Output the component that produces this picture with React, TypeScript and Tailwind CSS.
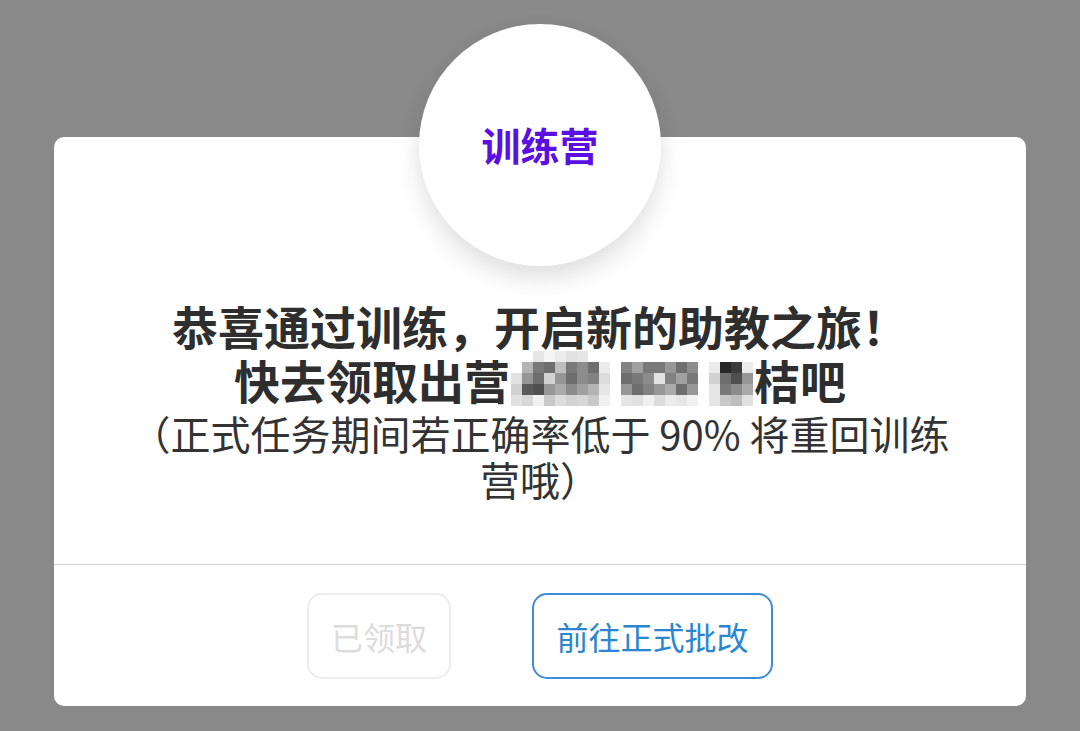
import React from "react";

const mosaic: number[][] = [
  [0, 0, 230, 245, 235, 225, 230, 0, 0, 0, 0, 0, 0, 0, 0, 0, 0, 0, 0, 0, 0, 0],
  [0, 180, 120, 110, 190, 120, 140, 110, 235, 0, 130, 160, 120, 120, 150, 110, 140, 0, 235, 40, 60, 235],
  [225, 150, 110, 210, 150, 110, 140, 130, 220, 0, 110, 120, 140, 225, 130, 160, 120, 0, 210, 110, 80, 150],
  [210, 90, 80, 150, 170, 140, 160, 180, 230, 0, 150, 110, 130, 150, 170, 110, 150, 0, 230, 120, 140, 170],
  [225, 215, 240, 200, 220, 210, 215, 200, 240, 0, 230, 225, 240, 220, 235, 230, 240, 0, 230, 200, 190, 225],
];

function Mosaic() {
  return (
    <span className="inline-flex flex-col align-middle mx-[1px] translate-y-[-1px]">
      {mosaic.map((row, r) => (
        <span key={r} className="flex">
          {row.map((v, c) => (
            <span
              key={c}
              className="block w-[11px] h-[11px]"
              style={{ backgroundColor: v === 0 ? "transparent" : `rgb(${v},${v},${v})` }}
            />
          ))}
        </span>
      ))}
    </span>
  );
}

export default function App() {
  return (
    <div
      className="w-[1080px] h-[731px] bg-[#898989] pt-[137px] px-[54px] overflow-hidden"
      style={{ fontFamily: '"Noto Sans CJK SC", "Noto Sans", sans-serif' }}
    >
      <div className="w-[972px] h-[569px] bg-white rounded-[10px] flex flex-col">
        <div className="self-center -mt-[113px] w-[242px] h-[242px] rounded-full bg-white shadow-[0_12px_24px_rgba(0,0,0,0.13)] flex items-center justify-center">
          <span className="text-[#5a10e2] text-[39px] font-bold leading-none -mt-[2px]">训练营</span>
        </div>
        <div className="px-[62px] mt-[33px] text-center text-[#2e2e2e]">
          <div className="text-[46px] font-bold leading-[53px]">
            <div>恭喜通过训练，开启新的助教之旅！</div>
            <div className="flex items-center justify-center">
              <span>快去领取出营</span>
              <Mosaic />
              <span>桔吧</span>
            </div>
          </div>
          <div className="mt-[3px] text-[40px] leading-[46px] text-[#333333]">
            （正式任务期间若正确率低于 90% 将重回训练营哦）
          </div>
        </div>
        <div className="mt-auto border-t border-[#d4d4d4] flex justify-center gap-[81px] pt-[28px] pb-[27px]">
          <button className="w-[144px] h-[86px] rounded-[15px] border-2 border-[#ececec] text-[#dcdcdc] text-[32px]">
            已领取
          </button>
          <button className="w-[241px] h-[86px] rounded-[15px] border-2 border-[#3d8ed6] text-[#2b86d2] text-[32px]">
            前往正式批改
          </button>
        </div>
      </div>
    </div>
  );
}
